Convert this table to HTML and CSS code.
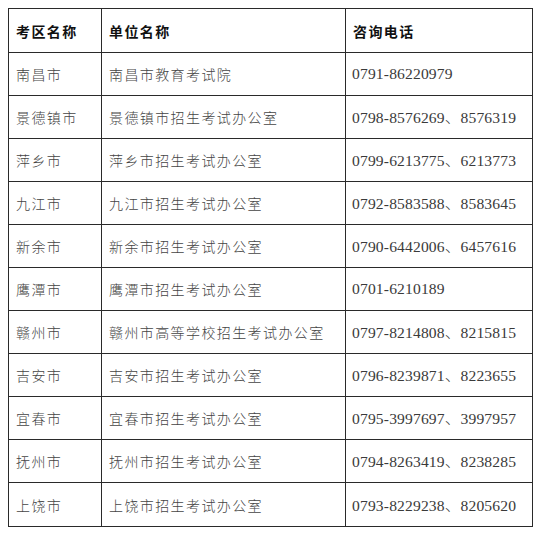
FILE: index.html
```html
<!DOCTYPE html>
<html lang="zh-CN">
<head>
<meta charset="utf-8">
<title>考区咨询电话</title>
<link rel="stylesheet" href="styles.css">
</head>
<body>
<table class="contacts">
  <colgroup>
    <col class="c-area">
    <col class="c-unit">
    <col class="c-tel">
  </colgroup>
  <thead>
    <tr><th>考区名称</th><th>单位名称</th><th>咨询电话</th></tr>
  </thead>
  <tbody>
    <tr><td>南昌市</td><td>南昌市教育考试院</td><td class="tel">0791-86220979</td></tr>
    <tr><td>景德镇市</td><td>景德镇市招生考试办公室</td><td class="tel">0798-8576269<span class="sep">、</span>8576319</td></tr>
    <tr><td>萍乡市</td><td>萍乡市招生考试办公室</td><td class="tel">0799-6213775<span class="sep">、</span>6213773</td></tr>
    <tr><td>九江市</td><td>九江市招生考试办公室</td><td class="tel">0792-8583588<span class="sep">、</span>8583645</td></tr>
    <tr><td>新余市</td><td>新余市招生考试办公室</td><td class="tel">0790-6442006<span class="sep">、</span>6457616</td></tr>
    <tr><td>鹰潭市</td><td>鹰潭市招生考试办公室</td><td class="tel">0701-6210189</td></tr>
    <tr><td>赣州市</td><td>赣州市高等学校招生考试办公室</td><td class="tel">0797-8214808<span class="sep">、</span>8215815</td></tr>
    <tr><td>吉安市</td><td>吉安市招生考试办公室</td><td class="tel">0796-8239871<span class="sep">、</span>8223655</td></tr>
    <tr><td>宜春市</td><td>宜春市招生考试办公室</td><td class="tel">0795-3997697<span class="sep">、</span>3997957</td></tr>
    <tr><td>抚州市</td><td>抚州市招生考试办公室</td><td class="tel">0794-8263419<span class="sep">、</span>8238285</td></tr>
    <tr class="last"><td>上饶市</td><td>上饶市招生考试办公室</td><td class="tel">0793-8229238<span class="sep">、</span>8205620</td></tr>
  </tbody>
</table>
</body>
</html>
```

FILE: styles.css
```css
html, body {
  background: #ffffff;
}
body {
  margin: 8px 0 0 8px;
  font-family: "Noto Sans CJK SC", "Noto Sans", sans-serif;
}
.contacts {
  border-collapse: collapse;
  table-layout: fixed;
  width: 524px;
}
.c-area { width: 93px; }
.c-unit { width: 244px; }
.c-tel { width: 187px; }

.contacts th,
.contacts td {
  border: 1px solid #2a2a2a;
  height: 42px;
  padding: 0 0 0 7px;
  text-align: left;
  vertical-align: middle;
  white-space: nowrap;
  font-size: 14px;
  line-height: 18px;
  letter-spacing: 1.4px;
}
.contacts th {
  height: 43px;
  font-weight: 700;
  color: #111111;
}
.contacts .last td {
  height: 43px;
}
.contacts td {
  font-weight: 300;
  color: #444444;
}
.contacts td.tel {
  font-family: "Liberation Serif", "Noto Sans CJK SC", serif;
  font-size: 15.6px;
  font-weight: 400;
  letter-spacing: 0.15px;
  padding-left: 6px;
  color: #3a3a3a;
}
.sep {
  font-family: "Noto Sans CJK SC", sans-serif;
  font-weight: 300;
}
```
